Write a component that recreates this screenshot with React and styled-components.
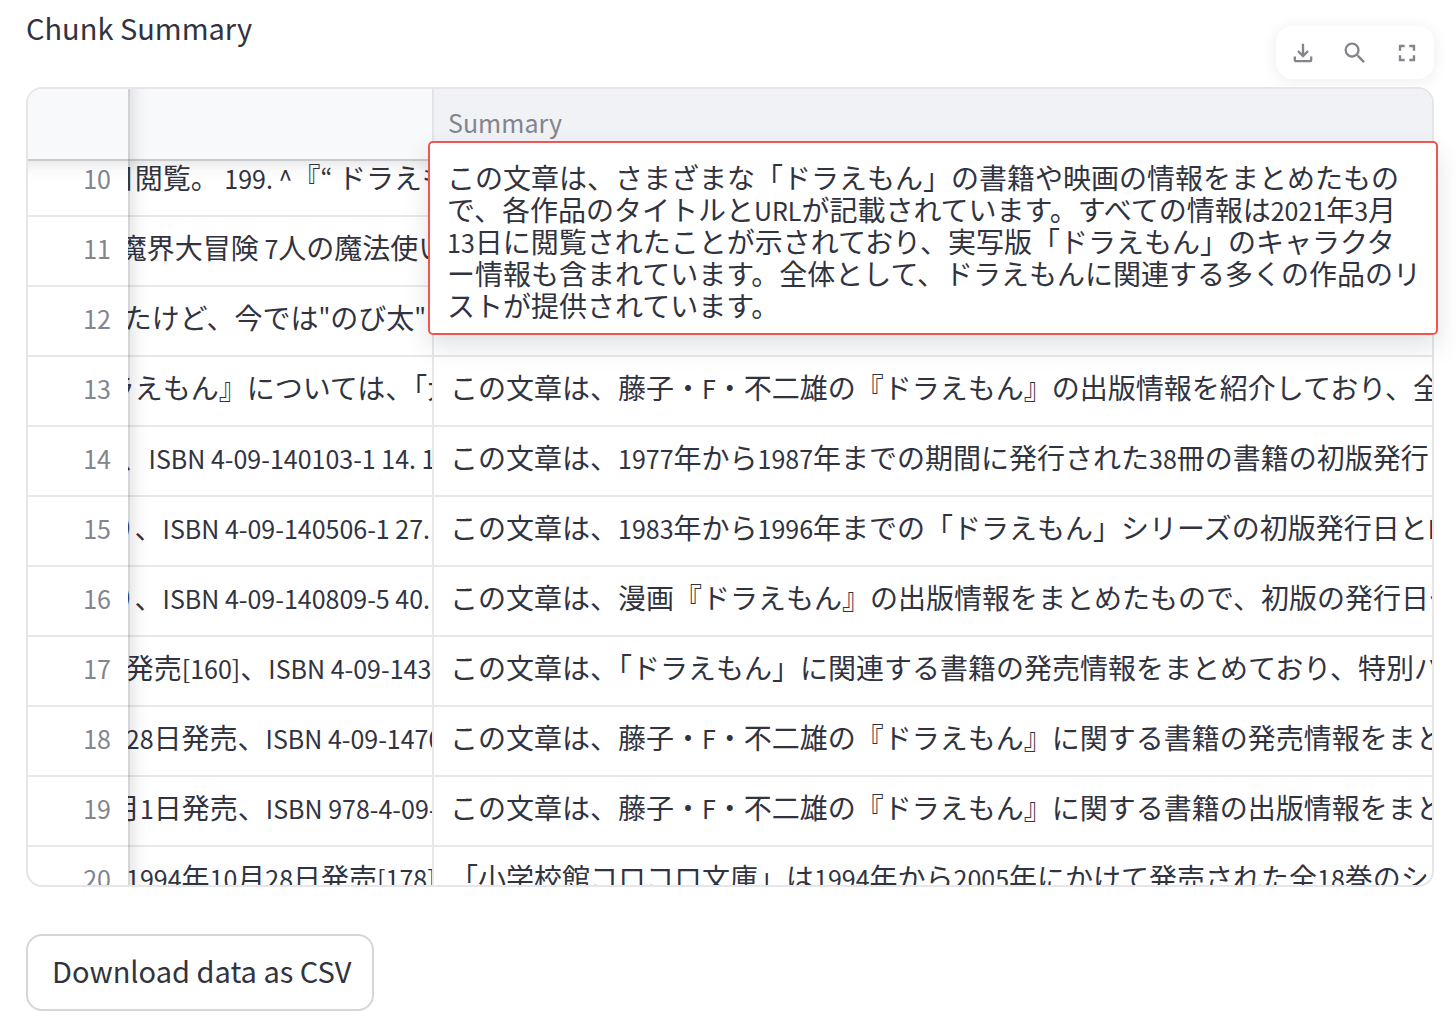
import React from "react";
import styled, { createGlobalStyle } from "styled-components";
import { MdOutlineFileDownload, MdSearch, MdFullscreen } from "react-icons/md";

const GlobalStyle = createGlobalStyle`
  * { box-sizing: border-box; }
  body {
    margin: 0;
    background: #ffffff;
    color: #31333f;
    font-family: "Noto Sans CJK JP", "Noto Sans", sans-serif;
  }
`;

const Page = styled.main`
  padding: 22px 22px 22px 26px;
`;

const TopBar = styled.header`
  display: flex;
  justify-content: space-between;
  align-items: flex-start;
  margin-bottom: 8px;
`;

const Title = styled.h1`
  margin: 0;
  font-size: 29px;
  line-height: 10px;
  font-weight: 400;
`;

const Toolbar = styled.div`
  display: flex;
  margin-top: 4px;
  padding: 0 1px;
  border-radius: 16px;
  background: #ffffff;
  box-shadow: 0 2px 16px rgba(0, 0, 0, 0.08);
`;

const ToolButton = styled.button`
  display: flex;
  align-items: center;
  justify-content: center;
  width: 52px;
  height: 53px;
  padding: 0;
  border: 0;
  background: transparent;
  color: #83848c;
  cursor: pointer;
`;

const GridArea = styled.section`
  position: relative;
`;

const Frame = styled.div`
  position: relative;
  height: 800px;
  overflow: hidden;
  border: 2px solid #e6e6e8;
  border-radius: 16px;
`;

const Table = styled.table`
  width: 100%;
  table-layout: fixed;
  border-collapse: separate;
  border-spacing: 0;
`;

const IndexCol = styled.col`
  width: 100px;
`;

const ChunkCol = styled.col`
  width: 306px;
`;

const HeadCell = styled.th`
  height: 72px;
  padding: 0 14px 4px;
  border-bottom: 2px solid #cacbce;
  border-right: ${(p) => (p.$divider ? "2px solid #e3e4e8" : "0")};
  background: ${(p) => (p.$active ? "#f0f2f6" : "#f8f9fb")};
  color: #83848c;
  font-size: 25px;
  line-height: 32px;
  font-weight: 400;
  text-align: left;
`;

const Row = styled.tr`
  height: 70px;

  &:first-child {
    height: 56px;
  }
`;

const Cell = styled.td`
  padding: 0 0 22px;
  border-bottom: 2px solid #e8e8e9;
  border-right: ${(p) => (p.$divider ? "2px solid #e8e8e9" : "0")};
  vertical-align: bottom;
`;

const IndexCell = styled.th`
  padding: 0 17px 21px 0;
  border-bottom: 2px solid #e8e8e9;
  color: #83848c;
  font-size: 25px;
  line-height: 32px;
  font-weight: 400;
  text-align: right;
  vertical-align: bottom;
`;

const Clip = styled.div`
  height: 32px;
  padding-left: 16px;
  overflow: hidden;
  font-size: 28px;
  line-height: 32px;
  white-space: pre;
`;

const ScrolledClip = styled(Clip)`
  padding-left: 0;
  text-indent: -58px;
`;

const Latin = styled.span`
  font-size: 25px;
`;

const FrozenEdge = styled.div`
  position: absolute;
  top: 0;
  bottom: 0;
  left: 100px;
  width: 40px;
  border-left: 2px solid rgba(49, 51, 63, 0.2);
  box-shadow: inset 26px 0 20px -26px rgba(0, 0, 0, 0.16);
  pointer-events: none;
`;

const HeaderEdge = styled.div`
  position: absolute;
  top: 72px;
  left: 0;
  right: 0;
  height: 40px;
  box-shadow: inset 0 26px 20px -26px rgba(0, 0, 0, 0.16);
  pointer-events: none;
`;

const CellPopup = styled.div`
  position: absolute;
  top: 54px;
  left: 402px;
  right: -4px;
  padding: 18px 17px 12px;
  border: 2px solid #ef5552;
  border-radius: 5px;
  background: #ffffff;
  box-shadow: 0 12px 24px rgba(62, 65, 86, 0.15);
  font-size: 28px;
  line-height: 32px;
`;

const PopupLine = styled.div`
  height: 32px;
  white-space: pre;
`;

const DownloadButton = styled.button`
  display: block;
  height: 77px;
  margin-top: 47px;
  padding: 0 20px 6px 24px;
  border: 2px solid #d6d6d9;
  border-radius: 16px;
  background: #ffffff;
  color: #31333f;
  font-family: inherit;
  font-size: 29px;
  line-height: 40px;
  cursor: pointer;
`;

/* Latin runs are set a step smaller so that digits take half a kana width. */
function Mixed({ children }) {
  return children
    .split(/([\x20-\x7e“]+)/)
    .filter(Boolean)
    .map((run, i) => (/^[\x20-\x7e“]/.test(run) ? <Latin key={i}>{run}</Latin> : run));
}

const rows = [
  { id: 10, chunk: "月-日閲覧。 199. ^『“ ドラえもん", summary: "" },
  { id: 11, chunk: "の1.魔界大冒険 7人の魔法使い", summary: "" },
  { id: 12, chunk: "っ“1たけど、今では\"のび太\"", summary: "" },
  { id: 13, chunk: "-ドラえもん』については、「大", summary: "この文章は、藤子・F・不二雄の『ドラえもん』の出版情報を紹介しており、全" },
  { id: 14, chunk: "日1-、ISBN 4-09-140103-1 14. 1", summary: "この文章は、1977年から1987年までの期間に発行された38冊の書籍の初版発行日" },
  { id: 15, chunk: "日1-）、ISBN 4-09-140506-1 27. ", summary: "この文章は、1983年から1996年までの「ドラえもん」シリーズの初版発行日とISBN" },
  { id: 16, chunk: "日1-）、ISBN 4-09-140809-5 40. ", summary: "この文章は、漫画『ドラえもん』の出版情報をまとめたもので、初版の発行日や" },
  { id: 17, chunk: "25日発売[160]、ISBN 4-09-143", summary: "この文章は、「ドラえもん」に関連する書籍の発売情報をまとめており、特別バ" },
  { id: 18, chunk: "10月28日発売、ISBN 4-09-1470", summary: "この文章は、藤子・F・不二雄の『ドラえもん』に関する書籍の発売情報をまとめ" },
  { id: 19, chunk: "年7月1日発売、ISBN 978-4-09-", summary: "この文章は、藤子・F・不二雄の『ドラえもん』に関する書籍の出版情報をまとめ" },
  { id: 20, chunk: "文庫1994年10月28日発売[178]、", summary: "「小学校館コロコロ文庫」は1994年から2005年にかけて発売された全18巻のシリーズ" },
];

const popupLines = [
  "この文章は、さまざまな「ドラえもん」の書籍や映画の情報をまとめたもの",
  "で、各作品のタイトルとURLが記載されています。すべての情報は2021年3月",
  "13日に閲覧されたことが示されており、実写版「ドラえもん」のキャラクタ",
  "ー情報も含まれています。全体として、ドラえもんに関連する多くの作品のリ",
  "ストが提供されています。",
];

export default function App() {
  return (
    <Page lang="ja">
      <GlobalStyle />
      <TopBar>
        <Title>Chunk Summary</Title>
        <Toolbar>
          <ToolButton type="button" aria-label="Download">
            <MdOutlineFileDownload size={28} />
          </ToolButton>
          <ToolButton type="button" aria-label="Search">
            <MdSearch size={28} />
          </ToolButton>
          <ToolButton type="button" aria-label="Fullscreen">
            <MdFullscreen size={28} />
          </ToolButton>
        </Toolbar>
      </TopBar>
      <GridArea>
        <Frame>
          <Table>
            <colgroup>
              <IndexCol />
              <ChunkCol />
              <col />
            </colgroup>
            <thead>
              <tr>
                <HeadCell />
                <HeadCell $divider />
                <HeadCell $active scope="col">Summary</HeadCell>
              </tr>
            </thead>
            <tbody>
              {rows.map((row) => (
                <Row key={row.id}>
                  <IndexCell scope="row">{row.id}</IndexCell>
                  <Cell $divider>
                    <ScrolledClip><Mixed>{row.chunk}</Mixed></ScrolledClip>
                  </Cell>
                  <Cell>
                    <Clip><Mixed>{row.summary}</Mixed></Clip>
                  </Cell>
                </Row>
              ))}
            </tbody>
          </Table>
          <HeaderEdge />
          <FrozenEdge />
        </Frame>
        <CellPopup>
          {popupLines.map((line) => (
            <PopupLine key={line}><Mixed>{line}</Mixed></PopupLine>
          ))}
        </CellPopup>
      </GridArea>
      <DownloadButton type="button">Download data as CSV</DownloadButton>
    </Page>
  );
}
